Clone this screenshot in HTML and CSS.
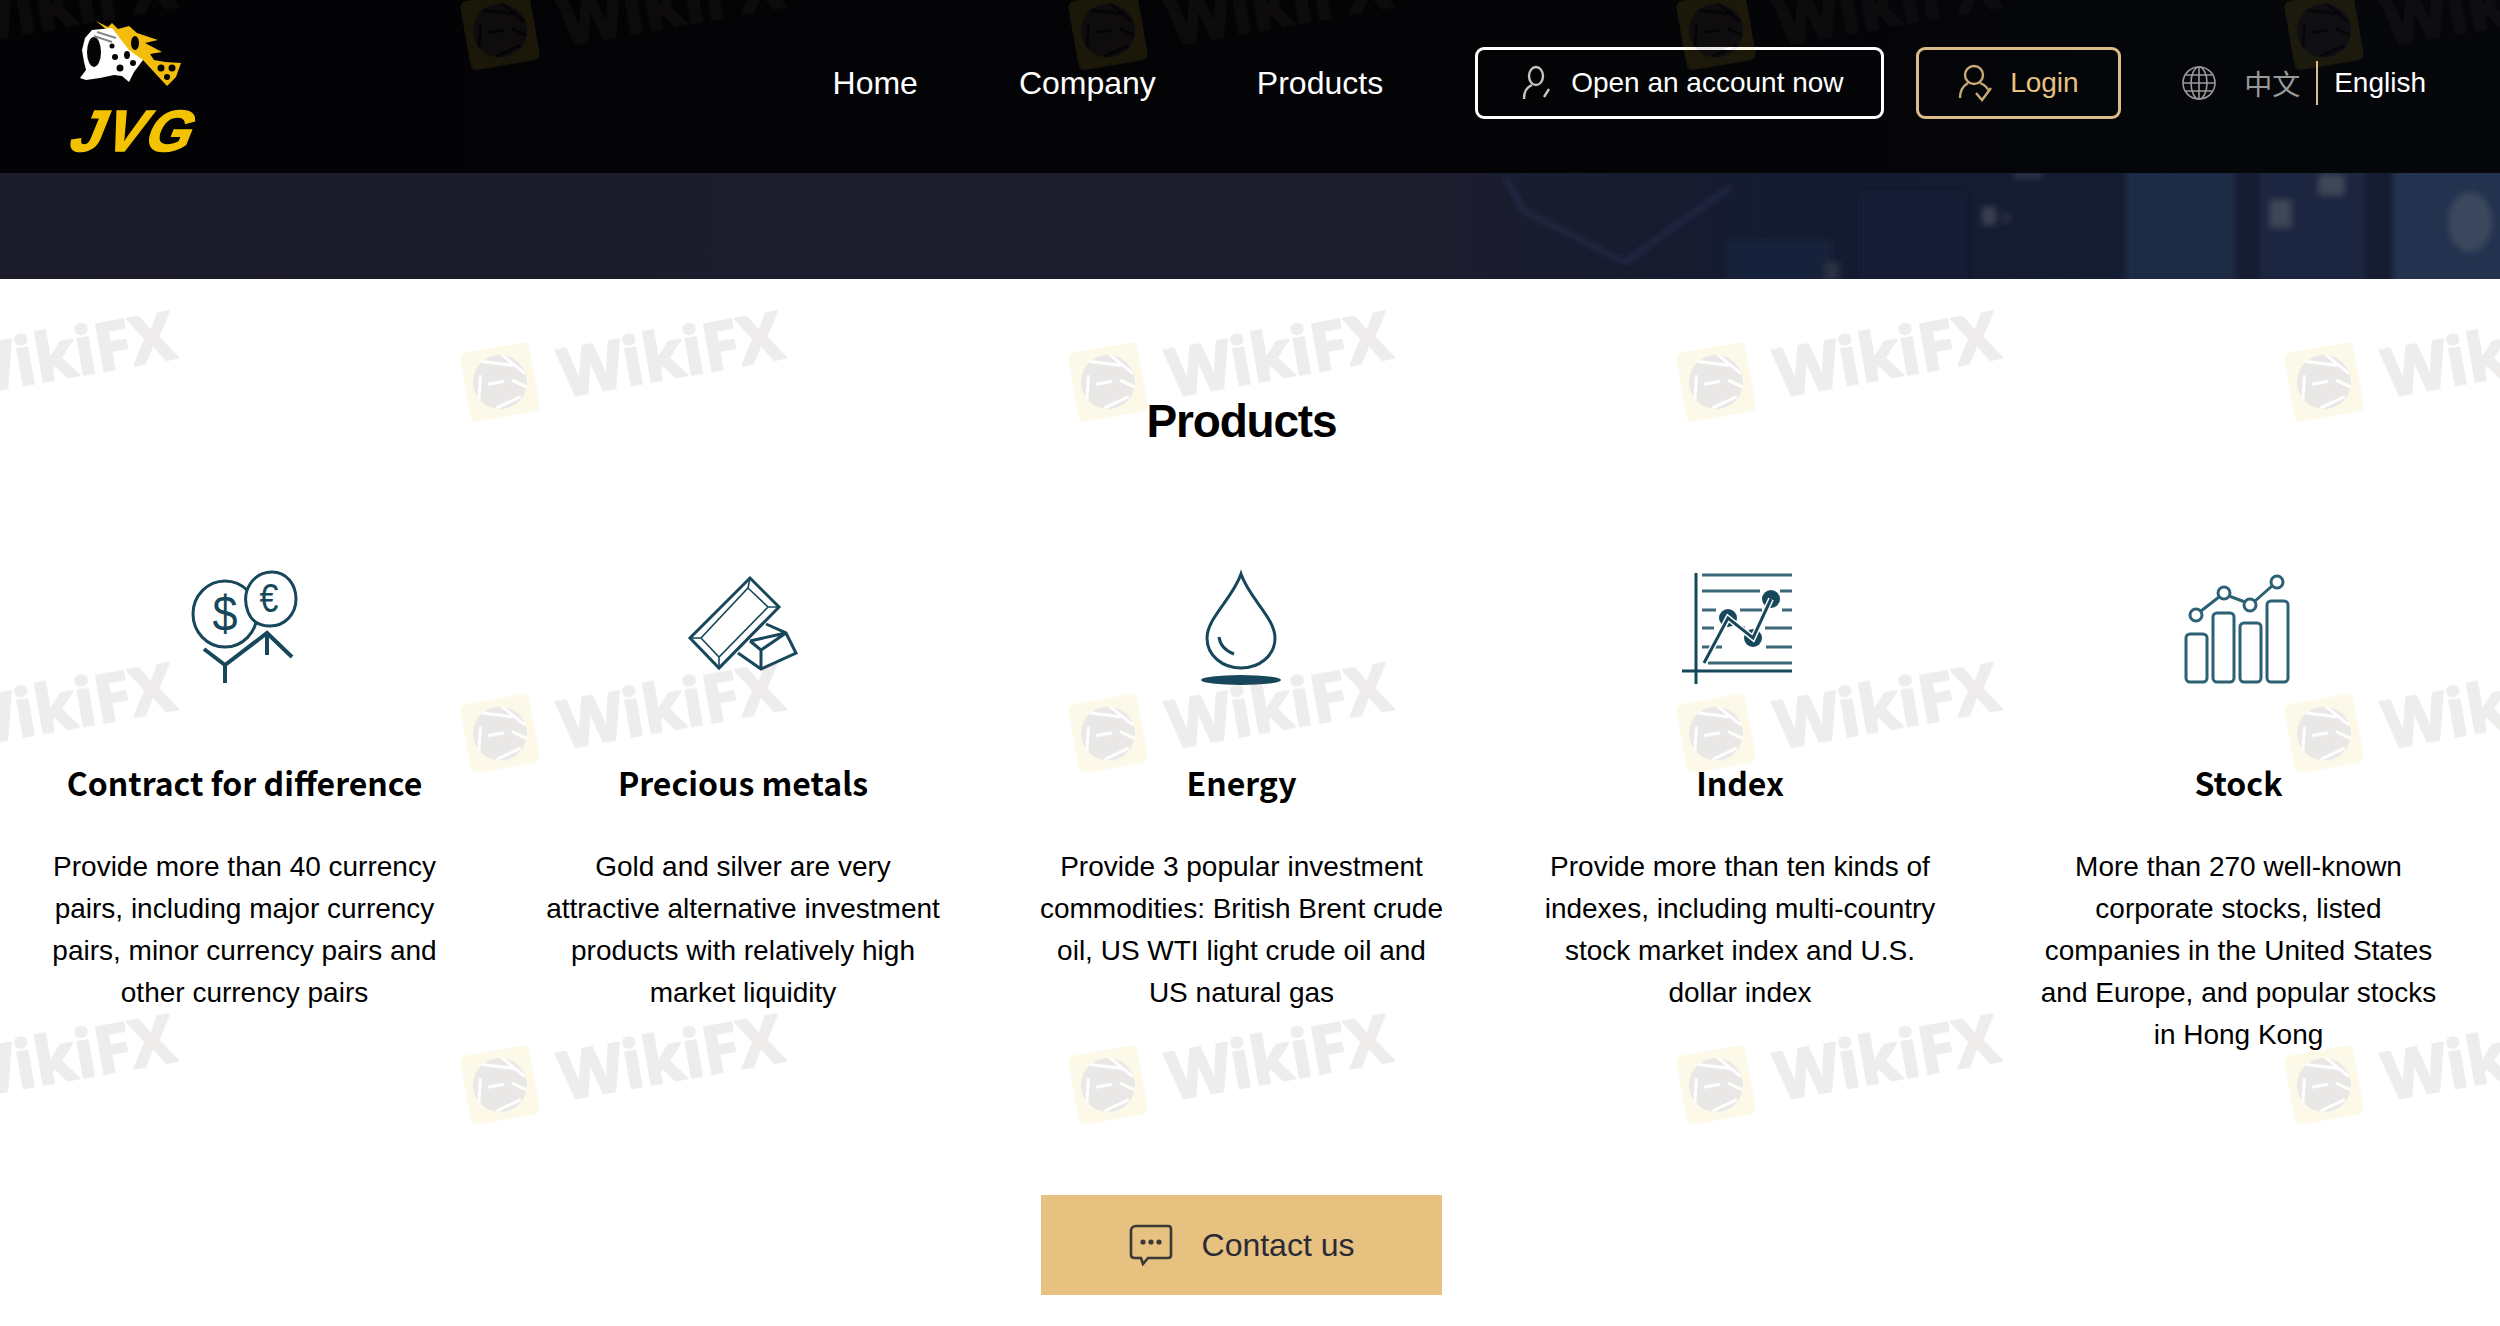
FILE: index.html
```html
<!DOCTYPE html>
<html lang="en">
<head>
<meta charset="utf-8">
<title>JVG Products</title>
<link rel="stylesheet" href="styles.css">
</head>
<body>
<div class="page">
  <header class="topbar">
    <a class="logo" href="#">
      <svg class="logo-art" viewBox="60 15 140 80">
        <path class="logo-gold" d="M96 21 108 27 112 23 118 29 129 26 137 33 158 40 145 43 162 52 150 54 154 60 165 62 181 63 176 77 167 86 154 72 143 60 125 63 116 43 107 30Z"/>
        <path class="logo-white" d="M92 30 112 28 129 50 143 60 134 72 129 82 122 76 114 75 100 78 86 80 80 78 86 70 84 62 82 50 85 38Z"/>
        <ellipse class="logo-dark" cx="94" cy="52" rx="7" ry="15"/>
        <path class="logo-line" d="M94 36 112 42M97 32 116 38"/>
        <circle class="logo-dark" cx="115" cy="57" r="3"/>
        <circle class="logo-dark" cx="120" cy="68" r="3.5"/>
        <circle class="logo-dark" cx="133" cy="63" r="3"/>
        <circle class="logo-dark" cx="112" cy="46" r="2.5"/>
        <ellipse class="logo-dark" cx="135" cy="43" rx="4" ry="7"/>
        <ellipse class="logo-dark" cx="127" cy="55" rx="3" ry="4"/>
        <circle class="logo-dark" cx="161" cy="68" r="3.5"/>
        <circle class="logo-dark" cx="172" cy="68" r="3.5"/>
        <circle class="logo-dark" cx="167" cy="77" r="3"/>
      </svg>
      <span class="logo-word">JVG</span>
    </a>
    <nav class="nav">
      <a href="#">Home</a>
      <a href="#">Company</a>
      <a href="#">Products</a>
    </nav>
    <a class="btn btn-open" href="#">
      <svg class="btn-icon" viewBox="1519 66 32 36">
        <ellipse cx="1535" cy="77" rx="7" ry="9"/>
        <path d="M1523 100C1523 92 1526 88 1531 86M1543 98 1548 90"/>
      </svg>
      Open an account now
    </a>
    <a class="btn btn-login" href="#">
      <svg class="btn-icon" viewBox="1956 64 36 38">
        <circle cx="1973" cy="75" r="9"/>
        <path d="M1959 98C1959 90 1962 86 1967 83M1979 83C1984 85 1987 88 1988 92M1975 93 1981 100 1990 88"/>
      </svg>
      Login
    </a>
    <div class="lang">
      <svg class="globe" viewBox="0 0 34 34">
        <circle cx="17" cy="17" r="16"/>
        <ellipse cx="17" cy="17" rx="8" ry="16"/>
        <path d="M17 1V33M1 17H33M4 9H30M4 25H30"/>
      </svg>
      <span class="lang-zh">中文</span>
      <span class="lang-en">English</span>
    </div>
  </header>

  <div class="band">
    <svg class="band-art" viewBox="0 173 2500 106" preserveAspectRatio="none">
      <defs>
        <linearGradient id="bandfade" x1="0" x2="1" y1="0" y2="0">
          <stop offset="0" stop-color="#1b1b2a"/>
          <stop offset=".55" stop-color="#1c1d2d"/>
          <stop offset=".72" stop-color="#141b30"/>
          <stop offset="1" stop-color="#161f36"/>
        </linearGradient>
        <filter id="soft" x="-5%" y="-5%" width="110%" height="110%"><feGaussianBlur stdDeviation="3"/></filter>
      </defs>
      <rect x="0" y="173" width="2500" height="106" fill="url(#bandfade)"/>
      <g filter="url(#soft)">
        <path class="band-line" d="M1505 177 1523 210 1625 262 1730 187"/>
        <rect x="1726" y="240" width="106" height="50" fill="#16223a"/>
        <rect x="1860" y="192" width="105" height="98" fill="#171f36"/>
        <rect x="2126" y="160" width="109" height="130" fill="#1b2a45"/>
        <rect x="2235" y="160" width="25" height="130" fill="#131c33"/>
        <rect x="2260" y="160" width="105" height="130" fill="#1a2741"/>
        <rect x="2365" y="160" width="28" height="130" fill="#121a30"/>
        <rect x="2393" y="160" width="117" height="130" fill="#243350"/>
        <rect x="1982" y="207" width="14" height="18" fill="#3a4052"/>
        <rect x="2003" y="213" width="6" height="10" fill="#30364a"/>
        <rect x="2014" y="173" width="28" height="4" fill="#3f4452"/>
        <rect x="2270" y="200" width="21" height="27" fill="#3c4759"/>
        <rect x="2319" y="175" width="25" height="20" fill="#3c4759"/>
        <rect x="1825" y="262" width="14" height="18" fill="#2a3042"/>
        <ellipse cx="2470" cy="222" rx="22" ry="30" fill="#3a465c"/>
      </g>
    </svg>
  </div>

  <main class="products">
    <h1 class="products-title">Products</h1>
    <div class="cards">
      <article class="card">
        <svg class="card-icon" viewBox="185 565 120 120">
          <ellipse cx="225" cy="614" rx="32" ry="33"/>
          <path class="white-fill" d="M248 612C240 590 254 572 272 572 287 572 296 585 296 599 296 614 285 626 270 626 260 626 252 622 248 612Z"/>
          <text class="icon-glyph" transform="translate(225 631) scale(.9 1)" x="0" y="0" font-size="50">$</text>
          <text class="icon-glyph" transform="translate(269 612) scale(.85 1)" x="0" y="0" font-size="40">€</text>
          <path class="thick" d="M204 649 225 665 267 633 292 657M225 665V683M267 633V655"/>
        </svg>
        <h2 class="card-title">Contract for difference</h2>
        <p class="card-text">Provide more than 40 currency pairs, including major currency pairs, minor currency pairs and other currency pairs</p>
      </article>
      <article class="card">
        <svg class="card-icon" viewBox="683 565 120 120">
          <path d="M750 578 779 607 719 668 690 638Z"/>
          <path class="thin" d="M748 588 768 607 719 657 701 638ZM750 578 748 588M779 607 768 607M719 668 719 657M690 638 701 638"/>
          <path d="M766 624 786 633 796 653 761 669 738 653M750 641 786 633M750 641 761 650 761 669M761 650 786 633"/>
        </svg>
        <h2 class="card-title">Precious metals</h2>
        <p class="card-text">Gold and silver are very attractive alternative investment products with relatively high market liquidity</p>
      </article>
      <article class="card">
        <svg class="card-icon" viewBox="1181 565 120 120">
          <path d="M1240 574C1232 598 1206 618 1206 638 1206 656 1222 668 1240 668 1258 668 1274 656 1274 638 1274 618 1248 598 1240 574Z"/>
          <path d="M1218 637C1219 645 1225 651 1233 654"/>
          <ellipse class="solid" cx="1240" cy="680" rx="40" ry="5"/>
        </svg>
        <h2 class="card-title">Energy</h2>
        <p class="card-text">Provide 3 popular investment commodities: British Brent crude oil, US WTI light crude oil and US natural gas</p>
      </article>
      <article class="card">
        <svg class="card-icon" viewBox="1680 565 120 120">
          <path d="M1696 573V684M1682 671H1792"/>
          <path class="grid-line" d="M1702 575H1792M1702 591H1760M1780 591H1792M1702 610H1716M1740 610H1762M1782 610H1792M1702 628H1714M1742 628H1745M1765 628H1792M1702 647H1722M1766 647H1792M1708 663H1792"/>
          <circle class="dot" cx="1728" cy="618" r="9"/>
          <circle class="dot" cx="1753" cy="638" r="9"/>
          <circle class="dot" cx="1771" cy="599" r="9"/>
          <path class="halo" d="M1704 663 1728 618 1753 638 1771 599"/>
          <path class="trend" d="M1704 663 1728 618 1753 638 1771 599"/>
        </svg>
        <h2 class="card-title">Index</h2>
        <p class="card-text">Provide more than ten kinds of indexes, including multi-country stock market index and U.S. dollar index</p>
      </article>
      <article class="card">
        <svg class="card-icon card-icon-light" viewBox="2180 565 120 120">
          <rect x="2187" y="634" width="21" height="48" rx="4"/>
          <rect x="2214" y="613" width="21" height="69" rx="4"/>
          <rect x="2241" y="623" width="21" height="59" rx="4"/>
          <rect x="2268" y="601" width="21" height="81" rx="4"/>
          <path d="M2202 611 2220 597M2230 596 2246 602M2256 601 2273 586"/>
          <circle cx="2197" cy="615" r="6"/>
          <circle cx="2225" cy="593" r="6"/>
          <circle cx="2251" cy="605" r="6"/>
          <circle cx="2278" cy="582" r="6"/>
        </svg>
        <h2 class="card-title">Stock</h2>
        <p class="card-text">More than 270 well-known corporate stocks, listed companies in the United States and Europe, and popular stocks in Hong Kong</p>
      </article>
    </div>
    <a class="contact" href="#">
      <svg class="contact-icon" viewBox="1128 1224 44 42">
        <path d="M1135 1226H1167C1169 1226 1170 1227 1170 1229V1255C1170 1257 1169 1258 1167 1258H1147L1142 1264 1140 1258H1134C1132 1258 1130 1257 1130 1255V1231C1130 1228 1132 1226 1135 1226Z"/>
        <circle class="contact-dot" cx="1142" cy="1242" r="2.6"/>
        <circle class="contact-dot" cx="1150" cy="1242" r="2.6"/>
        <circle class="contact-dot" cx="1158" cy="1242" r="2.6"/>
      </svg>
      Contact us
    </a>
  </main>

  <svg class="watermark" width="2500" height="1326" aria-hidden="true">
    <defs>
      <mask id="wm-slits" maskUnits="userSpaceOnUse" x="0" y="0" width="130" height="160">
        <rect width="130" height="160" fill="#fff"/>
        <path class="wm-slit" d="M66 55 86 78M44 58 76 68M52 107 78 100M36 96 42 72M72 82 86 92M48 82H64"/>
      </mask>
      <pattern id="wm" patternUnits="userSpaceOnUse" x="440" y="-51.5" width="608" height="351.5">
        <g transform="rotate(-10 60 82)">
          <path class="wm-tile" fill-rule="evenodd" d="M32 47H88Q95 47 95 54V110Q95 117 88 117H32Q25 117 25 110V54Q25 47 32 47ZM60 55A27 27 0 1 0 60 109A27 27 0 1 0 60 55Z"/>
          <circle class="wm-eagle" cx="60" cy="82" r="27" mask="url(#wm-slits)"/>
        </g>
        <text class="wm-text" transform="translate(124 97) rotate(-10)" x="0" y="0">WikiFX</text>
      </pattern>
    </defs>
    <rect width="2500" height="1326" fill="url(#wm)"/>
  </svg>
</div>
</body>
</html>
```
FILE: styles.css
```css
* {
  box-sizing: border-box;
}

html,
body {
  margin: 0;
  padding: 0;
  background: #fff;
}

body {
  font-family: "Liberation Sans", "Noto Sans CJK SC", sans-serif;
  color: #000;
  overflow: hidden;
}

a {
  color: inherit;
  text-decoration: none;
}

.page {
  position: relative;
  width: 2500px;
  height: 1326px;
  overflow: hidden;
}

.topbar {
  display: flex;
  align-items: center;
  height: 173px;
  padding: 0 74px 7px 0;
  background: linear-gradient(90deg, #030305 0%, #040406 60%, #05070b 100%);
  color: #fff;
  font-size: 28px;
}

.logo {
  display: flex;
  flex-direction: column;
  width: 140px;
  margin: 15px 0 0 60px;
  align-self: flex-start;
}

.logo-art {
  display: block;
  width: 140px;
  height: 80px;
}

.logo-gold {
  fill: #f2bd0c;
}

.logo-white {
  fill: #fff;
}

.logo-dark {
  fill: #050505;
}

.logo-line {
  fill: none;
  stroke: #888;
  stroke-width: 2;
}

.logo-word {
  display: block;
  margin: 16px 0 0 7px;
  font-weight: 700;
  font-size: 58px;
  line-height: 40px;
  letter-spacing: 2px;
  color: #f3c200;
  -webkit-text-stroke: 1.5px #f3c200;
  transform: skewX(-22deg);
  transform-origin: 0 39px;
}

.nav {
  display: flex;
  gap: 101px;
  margin-left: auto;
  margin-right: 92px;
  font-size: 32px;
}

.btn {
  display: flex;
  align-items: center;
  height: 72px;
  border: 3px solid #fff;
  border-radius: 9px;
  white-space: nowrap;
}

.btn-icon {
  fill: none;
  stroke: currentColor;
  stroke-width: 2.4;
}

.btn-open {
  width: 409px;
  padding-left: 42px;
  gap: 19px;
}

.btn-open .btn-icon {
  width: 32px;
  height: 36px;
  color: #c4c4c4;
}

.btn-login {
  width: 205px;
  margin-left: 32px;
  padding-left: 38px;
  gap: 17px;
  border-color: #dcbb8a;
  color: #e6c17f;
}

.btn-login .btn-icon {
  width: 36px;
  height: 38px;
  color: #c9a877;
}

.lang {
  display: flex;
  align-items: center;
  margin-left: 61px;
}

.globe {
  width: 34px;
  height: 34px;
  fill: none;
  stroke: #9a9a9a;
  stroke-width: 1.6;
}

.lang-zh {
  margin-left: 28px;
  padding-right: 16px;
  color: #999;
}

.lang-en {
  display: flex;
  align-items: center;
  height: 44px;
  padding-left: 16px;
  border-left: 2px solid #dcbb8a;
}

.band {
  height: 106px;
  background: #1b1b2a;
}

.band-art {
  display: block;
  width: 100%;
  height: 106px;
}

.band-line {
  fill: none;
  stroke: #2a3058;
  stroke-width: 3;
}

.products {
  display: flex;
  flex-direction: column;
  align-items: center;
  padding: 112px 17px 0 0;
}

.products-title {
  margin: 0;
  font-size: 46px;
  line-height: 60px;
  font-weight: 700;
  letter-spacing: -1.2px;
}

.cards {
  display: grid;
  grid-template-columns: repeat(5, 408px);
  column-gap: 90.5px;
  justify-content: center;
  width: 100%;
  height: 630px;
  margin-top: 114px;
}

.card {
  display: flex;
  flex-direction: column;
  align-items: center;
  text-align: center;
}

.card-icon {
  display: block;
  width: 120px;
  height: 120px;
  fill: none;
  stroke: #17475b;
  stroke-width: 3;
}

.card-icon .thick {
  stroke-width: 4;
}

.card-icon .thin {
  stroke-width: 1.6;
}

.card-icon .solid {
  fill: #17475b;
  stroke: none;
}

.card-icon .white-fill {
  fill: #fff;
}

.icon-glyph {
  fill: #17475b;
  stroke: none;
  font-family: "Liberation Sans", sans-serif;
  text-anchor: middle;
}

.card-icon .grid-line {
  stroke: #3c6878;
  stroke-width: 3;
}

.card-icon .dot {
  fill: #17475b;
  stroke: none;
}

.card-icon .halo {
  stroke: #fff;
  stroke-width: 6;
}

.card-icon .trend {
  stroke: #17475b;
  stroke-width: 3;
}

.card-icon-light {
  stroke: #2d6175;
}

.card-title {
  margin: 72px 0 0;
  font-family: "Noto Sans CJK SC", "Noto Sans", sans-serif;
  font-size: 32px;
  line-height: 50px;
  font-weight: 700;
  white-space: nowrap;
}

.card-text {
  margin: 39px 0 0;
  font-size: 28px;
  line-height: 42px;
}

.contact {
  display: flex;
  align-items: center;
  justify-content: center;
  gap: 29px;
  width: 401px;
  height: 100px;
  background: #e6c17f;
  color: #2a2a36;
  font-size: 32px;
}

.contact-icon {
  width: 44px;
  height: 42px;
  fill: none;
  stroke: #3b3838;
  stroke-width: 2.6;
}

.contact-dot {
  fill: #3b3838;
  stroke: none;
}

.watermark {
  position: absolute;
  top: 0;
  left: 0;
  pointer-events: none;
}

.wm-tile {
  fill: rgba(240, 200, 40, 0.1);
}

.wm-eagle {
  fill: rgba(90, 70, 70, 0.13);
}

.wm-slit {
  fill: none;
  stroke: #000;
  stroke-width: 3;
}

.wm-text {
  font-family: "Open Sans", sans-serif;
  font-weight: 700;
  font-size: 66px;
  fill: #5a3c3c;
  stroke: #5a3c3c;
  stroke-width: 2.5;
  stroke-linejoin: round;
  opacity: 0.1;
}
```
